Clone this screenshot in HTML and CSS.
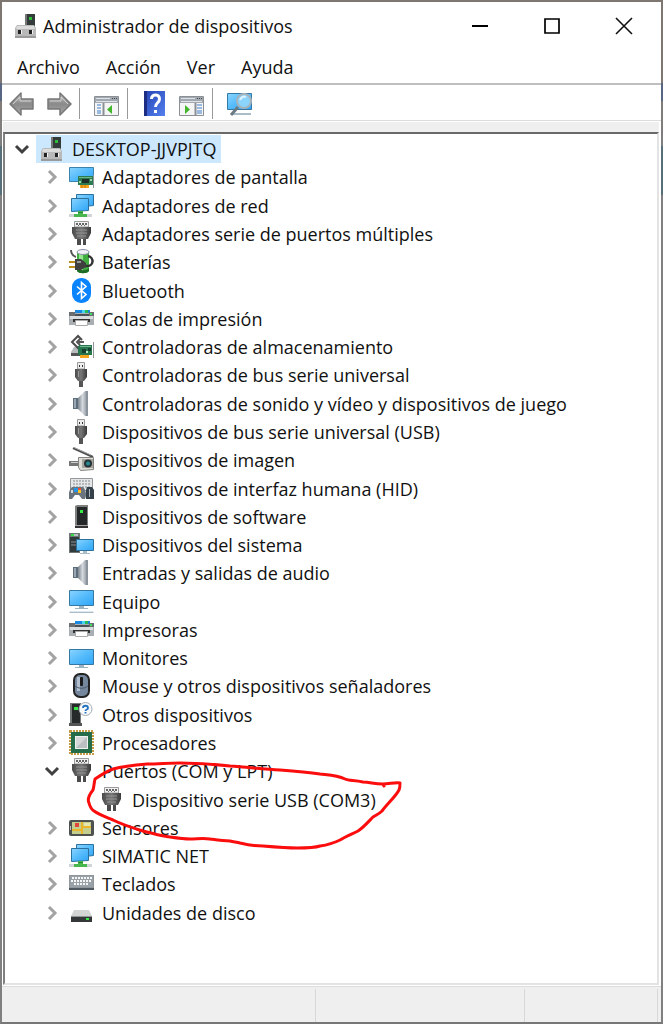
FILE: index.html
```html
<!DOCTYPE html>
<html lang="es">
<head>
    <meta charset="UTF-8">
    <meta name="viewport" content="width=device-width, initial-scale=1.0">
    <title>Administrador de dispositivos</title>
    <link rel="stylesheet" href="styles.css">
</head>
<body>
    <!-- Iconos -->
    <svg class="sprite" aria-hidden="true">
        <defs>
            <linearGradient id="gScreen" x1="0" y1="0" x2="1" y2="1">
                <stop offset="0" stop-color="#8ad4ff"/>
                <stop offset="0.5" stop-color="#55bbfb"/>
                <stop offset="1" stop-color="#2ea5f7"/>
            </linearGradient>
            <linearGradient id="gMetal" x1="0" y1="0" x2="1" y2="0">
                <stop offset="0" stop-color="#7b848d"/>
                <stop offset="0.5" stop-color="#d5dadf"/>
                <stop offset="1" stop-color="#8f979f"/>
            </linearGradient>
            <linearGradient id="gDark" x1="0" y1="0" x2="1" y2="0">
                <stop offset="0" stop-color="#4a4a4a"/>
                <stop offset="0.5" stop-color="#777"/>
                <stop offset="1" stop-color="#3a3a3a"/>
            </linearGradient>
            <linearGradient id="gArrow" x1="0" y1="0" x2="0" y2="1">
                <stop offset="0" stop-color="#c4c4c4"/>
                <stop offset="0.5" stop-color="#8a8a8a"/>
                <stop offset="1" stop-color="#a8a8a8"/>
            </linearGradient>
            <linearGradient id="gHelp" x1="0" y1="0" x2="1" y2="1">
                <stop offset="0" stop-color="#2443b4"/>
                <stop offset="1" stop-color="#5580ee"/>
            </linearGradient>
        </defs>

        <symbol id="i-computer" viewBox="0 0 26 26">
            <path d="M12 1h10v14H12z" fill="#333b3b"/>
            <path d="M12 1h2v14h-2z" fill="#777"/>
            <path d="M16 4h3v3h-3z" fill="#2fbf3c"/>
            <path d="M4 12h17l2 3v10H2V15z" fill="#b9b9b9"/>
            <path d="M4 13h17l1 3H3z" fill="#dcdcdc"/>
            <path d="M5 17h3v4H5zM16 17h3v4h-3z" fill="#222"/>
            <path d="M8 17h1v4H8zM19 17h1v4h-1z" fill="#f4f4f4"/>
            <path d="M2 23h21v2H2z" fill="#9b9b9b"/>
        </symbol>
        <symbol id="i-display" viewBox="0 0 26 26">
            <path d="M.5 3.500h24v14h-24z" fill="url(#gScreen)" stroke="#3c83b0"/>
            <path d="M9 12h15v9H9z" fill="#2c7b50"/>
            <path d="M10 13h13v1H10z" fill="#6ab387"/>
            <path d="M13 15h7v4h-7z" fill="#1c2f29"/>
            <path d="M10 17h2v2h-2zM21 15h2v2h-2z" fill="#9fd3ad"/>
            <path d="M11 21h9v3h-9z" fill="#f5a61d"/>
            <path d="M13 21v3M16 21v3" stroke="#c97a08"/>
            <path d="M24.500 11v13" stroke="#8d949a"/>
        </symbol>
        <symbol id="i-network" viewBox="0 0 26 26">
            <path d="M7.500 1.500h17v11l-17 2z" fill="url(#gScreen)" stroke="#2c719e"/>
            <path d="M0 21h23v3H0z" fill="#d2d5d7"/>
            <path d="M2.500 5.500h17v12l-17 1z" fill="url(#gScreen)" stroke="#2c719e"/>
            <path d="M9 18h5v3h4v3H5v-3h4z" fill="#47b74e"/>
            <path d="M9 19h5v1H9z" fill="#238b33"/>
        </symbol>
        <symbol id="i-serial" viewBox="0 0 26 26">
            <path d="M5.500.5h14V6h-14z" fill="#f1f1f1" stroke="#9a9a9a"/>
            <path d="M7 2h2v2H7zM10 2h2v2h-2zM13 2h2v2h-2zM16 2h2v2h-2zM9 4h1v1H9zM12 4h1v1h-1zM15 4h1v1h-1z" fill="#666"/>
            <path d="M3 6h19v6l-3 6H6l-3-6z" fill="url(#gDark)"/>
            <path d="M7 9h11M7 12h11M8 15h9" stroke="#959595"/>
            <path d="M8 18h4v6H8zM14 18h3v6h-3z" fill="#4b4b4b"/>
        </symbol>
        <symbol id="i-battery" viewBox="0 0 26 26">
            <path d="M8 3h12v19c-2 3-10 3-12 0z" fill="#3fae3f"/>
            <path d="M10 5h4v18h-4z" fill="#95e58d"/>
            <path d="M8 19c2 3 10 3 12 0v3c-2 3-10 3-12 0z" fill="#1d6b26"/>
            <ellipse cx="14" cy="3" rx="6" ry="2.500" fill="#f0f0f6" stroke="#8e8ea8"/>
            <path d="M2 1c0 4 2 6 5 7" fill="none" stroke="#555" stroke-width="2"/>
            <path d="M16 17c10 1 9-9 3-10" fill="none" stroke="#333" stroke-width="2.500"/>
            <path d="M6 10h6l5 4v4l-5 3H6z" fill="#3f3f3f"/>
            <path d="M8 12h4v2H8z" fill="#999"/>
            <path d="M0 13h6M0 18h6" stroke="#bd8e1c" stroke-width="2"/>
        </symbol>
        <symbol id="i-bluetooth" viewBox="0 0 26 26">
            <rect x="3" y="0" width="19" height="25" rx="9" fill="#0a84ff"/>
            <path d="M8 8.500l9 8-4.500 4v-16l4.500 4-9 8" fill="none" stroke="#fff" stroke-width="1.600"/>
        </symbol>
        <symbol id="i-printer" viewBox="0 0 26 26">
            <path d="M6 4h15v5H6z" fill="#1888e0"/>
            <path d="M13 4h3v5h-3z" fill="#45d6f1"/>
            <path d="M16 4h3v5h-3z" fill="#2cba58"/>
            <path d="M0 7h25v12H0z" fill="#a9aeb2"/>
            <path d="M0 6h6v4H0zM20 6h5v4h-5z" fill="#6a6e71"/>
            <path d="M6 8h14v2H6z" fill="#4b5257"/>
            <path d="M1 10h23v3H1z" fill="#dadddf"/>
            <path d="M4 13h17v3H4z" fill="#333"/>
            <path d="M6.500 14.500h12v5h-12z" fill="#fff" stroke="#aaa"/>
            <path d="M21 7h2v2h-2z" fill="#3fe05b"/>
        </symbol>
        <symbol id="i-storage" viewBox="0 0 26 26">
            <path d="M2 18l3-5h9v9H2z" fill="#b7bbbd"/>
            <path d="M2 19h10v3H2z" fill="#555"/>
            <path d="M13 6L9 2 3 8l6 6 2-2" fill="none" stroke="#4b4b4b" stroke-width="2"/>
            <path d="M15 8H8M11 5L8 8l3 3" fill="none" stroke="#555" stroke-width="2"/>
            <path d="M10 11h13v10H9v-7z" fill="#28764e"/>
            <path d="M11 12h11v1H11z" fill="#73b891"/>
            <path d="M13 15h4v4h-4zM19 14h3v3h-3z" fill="#183f30"/>
            <path d="M17 17h2v2h-2z" fill="#bfe3c7"/>
            <path d="M11 21h9v3h-9z" fill="#f5a61d"/>
            <path d="M24.500 8v16" stroke="#8d949a"/>
        </symbol>
        <symbol id="i-usb" viewBox="0 0 26 26">
            <path d="M8.500.5h7V7h-7z" fill="#eee" stroke="#999"/>
            <path d="M10 3h1v2h-1zM13 3h1v2h-1z" fill="#333"/>
            <path d="M6 7h12v8l-3 4H9l-3-4z" fill="url(#gDark)"/>
            <path d="M9 9h1v6H9z" fill="#999"/>
            <path d="M10 19h4v6h-4z" fill="#555"/>
        </symbol>
        <symbol id="i-speaker" viewBox="0 0 26 26">
            <path d="M4 7h6v11H4z" fill="#5d6d7b"/>
            <path d="M5 8h2v9H5z" fill="#98a7b3"/>
            <path d="M9 7l7-7h2v25h-2l-7-7z" fill="url(#gMetal)"/>
            <path d="M17 0h2v25h-2z" fill="#8a939b"/>
        </symbol>
        <symbol id="i-camera" viewBox="0 0 26 26">
            <path d="M4 1l20 9" stroke="#4e4e4e" stroke-width="2"/>
            <path d="M4 0l18 8" stroke="#aaa"/>
            <path d="M0 14h9v5H0z" fill="#777"/>
            <path d="M2 15h7v1H2z" fill="#ccc"/>
            <path d="M9.500 10.500h15v12l-13 1-2-3z" fill="#dedcd6" stroke="#85837f"/>
            <path d="M13 12h11v9H13z" fill="#a5a49f"/>
            <circle cx="19" cy="16.500" r="4" fill="#273337"/>
            <circle cx="19" cy="16.500" r="2" fill="#268c94"/>
        </symbol>
        <symbol id="i-hid" viewBox="0 0 26 26">
            <path d="M1.500 2.500h22v12h-22z" fill="#e4e6e7" stroke="#92989c"/>
            <path d="M4 5h18M4 8h18M4 11h18" stroke="#858b90" stroke-dasharray="2 1"/>
            <path d="M3 11h11c3 3 4 8 2 12h-3l-3-4H6l-3 4H0c-1-4 0-9 3-12z" fill="#69747e"/>
            <path d="M5 12h4v4H5z" fill="#2196e8"/>
            <path d="M9 12h3v2H9z" fill="#ed4f36"/>
            <path d="M9 14h3v3H9z" fill="#ffc525"/>
            <path d="M2 14h2v3H2z" fill="#d5dce0"/>
            <path d="M18 11h5l2 3v9h-8v-9z" fill="#34404a"/>
            <path d="M20 13h1v8h-1z" fill="#a6b1ba"/>
        </symbol>
        <symbol id="i-software" viewBox="0 0 26 26">
            <path d="M6 2l2-1h11v22H6z" fill="#7e8080"/>
            <path d="M8 3h10v18H8z" fill="#242828"/>
            <path d="M11 6h3v3h-3z" fill="#34ec43"/>
            <path d="M6 22h13v2H6z" fill="#333"/>
            <path d="M6 21h13v1H6z" fill="#a5a5a5"/>
        </symbol>
        <symbol id="i-system" viewBox="0 0 26 26">
            <path d="M0 1h11v20H0z" fill="#707777"/>
            <path d="M1 5h9v15H1z" fill="#30393c"/>
            <path d="M2 2h7v2H2z" fill="#b9c0c2"/>
            <path d="M2 2h3v2H2z" fill="#37dc42"/>
            <path d="M2 10h6M2 13h6" stroke="#8a9295"/>
            <path d="M7.500 7.500h17v11h-17z" fill="url(#gScreen)" stroke="#2c719e"/>
            <path d="M14 19h4v2h3v1H11v-1h3z" fill="#a9bdc9"/>
        </symbol>
        <symbol id="i-pc" viewBox="0 0 26 26">
            <path d="M.5 1.500h24v15H.5z" fill="url(#gScreen)" stroke="#3578a3"/>
            <path d="M10 17h5v2h4v1H6v-1h4z" fill="#9cb3c2"/>
            <path d="M2 22h21l2 2H0z" fill="#a9bcc8"/>
            <path d="M2 22h21v1H2z" fill="#dce8ef"/>
        </symbol>
        <symbol id="i-monitor" viewBox="0 0 26 26">
            <path d="M.5 4.500h24v15H.5z" fill="url(#gScreen)" stroke="#3578a3"/>
            <path d="M10 20h5v2h4v1H6v-1h4z" fill="#9cb3c2"/>
        </symbol>
        <symbol id="i-mouse" viewBox="0 0 26 26">
            <rect x="5" y="1" width="15" height="23" rx="6" fill="#75879c" stroke="#232323" stroke-width="2"/>
            <path d="M8 4h3v14H8z" fill="#b1bfce"/>
            <path d="M6 13c4 3 9 3 13 0" fill="none" stroke="#4b5a69"/>
            <rect x="11" y="4" width="3" height="9" rx="1" fill="#1b1b1b"/>
        </symbol>
        <symbol id="i-unknown" viewBox="0 0 26 26">
            <path d="M1 1h11v22H1z" fill="#737878"/>
            <path d="M3 2h8v19H3z" fill="#262a2a"/>
            <path d="M5 5h4v3H5z" fill="#34ec43"/>
            <path d="M0 21h13v3H0z" fill="#555"/>
            <circle cx="16.500" cy="7" r="6.500" fill="#f7f9fb" stroke="#a7adb2"/>
            <path d="M14 6c0-3 5-3 5 0 0 2-2.500 1-2.500 3M16.500 10v1.500" fill="none" stroke="#2272bd" stroke-width="1.800"/>
        </symbol>
        <symbol id="i-cpu" viewBox="0 0 26 26">
            <path d="M1 1h23v23H1z" fill="none" stroke="#c49a45" stroke-width="2" stroke-dasharray="2 1"/>
            <path d="M2 2h21v21H2z" fill="#256c4b"/>
            <path d="M6 6h13v13H6z" fill="#d5d7d8"/>
            <path d="M6 19L19 6v13z" fill="#bbbfc1"/>
            <path d="M6.500 6.500h12v12h-12z" fill="none" stroke="#eff3f0"/>
        </symbol>
        <symbol id="i-sensor" viewBox="0 0 26 26">
            <rect x="0" y="5" width="25" height="16" rx="2" fill="#4d5251"/>
            <path d="M3 7h19v12H3z" fill="#c4cf8f"/>
            <path d="M13 7v12M3 15h10M13 12h9" stroke="#e9b62c" stroke-width="2"/>
            <path d="M6 8h4v4H6z" fill="#e2463a"/>
            <path d="M15 8h6v3h-6z" fill="#e7e6ae"/>
            <path d="M1 11h1v4H1z" fill="#bbb"/>
        </symbol>
        <symbol id="i-keyboard" viewBox="0 0 26 26">
            <path d="M0 4h25v15H0z" fill="#8f969c"/>
            <path d="M1 5h23v11H1z" fill="#9aa2a9"/>
            <path d="M3 7h20M2 10h21M5 13h15" stroke="#f6f6f6" stroke-width="2" stroke-dasharray="2 1"/>
            <path d="M0 17h25v2H0z" fill="#505a62"/>
        </symbol>
        <symbol id="i-disk" viewBox="0 0 26 26">
            <path d="M5 10h15l3 6H2z" fill="#d3d5d5"/>
            <path d="M2 16h21v6H2z" fill="#343838"/>
            <path d="M2 16h21v1H2z" fill="#8f9494"/>
            <path d="M17 18h3v2h-3z" fill="#37e644"/>
        </symbol>

        <symbol id="i-chevron" viewBox="0 0 20 20">
            <path d="M7 4l6 6-6 6" fill="none" stroke="currentColor" stroke-width="3"/>
        </symbol>
        <symbol id="i-chevron-open" viewBox="0 0 20 20">
            <path d="M4 7l6 6 6-6" fill="none" stroke="currentColor" stroke-width="3"/>
        </symbol>

        <symbol id="t-arrow" viewBox="0 0 26 26">
            <path d="M1 13L12 2v6h12v10H12v6z" fill="url(#gArrow)" stroke="#777" stroke-width="1.500" stroke-linejoin="round"/>
            <path d="M4 13l7-7v4h11" fill="none" stroke="#d0d0d0"/>
        </symbol>
        <symbol id="t-tree" viewBox="0 0 26 26">
            <path d="M.5 5.500h24v19H.5z" fill="#f5f5f5" stroke="#8b9097"/>
            <path d="M1 6h23v6H1z" fill="#a2a8b0"/>
            <path d="M2 7h14v1H2zM2 10h21v1H2z" fill="#dfe3e8"/>
            <path d="M18 7h1v1h-1zM20 7h1v1h-1zM22 7h1v1h-1z" fill="#444"/>
            <path d="M9.500 12v12" stroke="#8b9097" stroke-width="2"/>
            <path d="M3 14h4M3 17h4M3 20h4M3 22h4" stroke="#3f80c8"/>
            <path d="M18 14v9l-5-4.500z" fill="#43b52c"/>
        </symbol>
        <symbol id="t-pane" viewBox="0 0 26 26">
            <path d="M.5 5.500h24v19H.5z" fill="#f5f5f5" stroke="#8b9097"/>
            <path d="M1 6h23v6H1z" fill="#a2a8b0"/>
            <path d="M2 7h14v1H2zM2 10h21v1H2z" fill="#dfe3e8"/>
            <path d="M18 7h1v1h-1zM20 7h1v1h-1zM22 7h1v1h-1z" fill="#444"/>
            <path d="M16.500 12v12" stroke="#8b9097" stroke-width="2"/>
            <path d="M18 14h5M18 17h5M18 20h5M18 22h5" stroke="#3f80c8"/>
            <path d="M6 14v9l5-4.500z" fill="#43b52c"/>
        </symbol>
        <symbol id="t-help" viewBox="0 0 26 26">
            <path d="M2 0h21v25H2z" fill="url(#gHelp)"/>
            <path d="M2 0h3v25H2z" fill="#1d2d84"/>
            <path d="M9.500 8c0-5.500 8-5.500 8 0 0 4-4 3.500-4 8" fill="none" stroke="#fff" stroke-width="3"/>
            <path d="M12 19h3v3h-3z" fill="#fff"/>
        </symbol>
        <symbol id="t-scan" viewBox="0 0 26 26">
            <path d="M.5 2.500h24v16H.5z" fill="url(#gScreen)" stroke="#3578a3"/>
            <path d="M4 22h20v2H4z" fill="#a9bcc8"/>
            <path d="M11 16l-7 8" stroke="#6c7a84" stroke-width="3"/>
            <circle cx="17" cy="10" r="7" fill="#8bd4fb" stroke="#a5b3bc" stroke-width="2"/>
            <path d="M13 9c1-3 4-4 6-3" fill="none" stroke="#dff4ff" stroke-width="2"/>
        </symbol>
    </svg>

    <div class="window">
        <header class="titlebar">
            <svg class="icon"><use href="#i-computer"/></svg>
            <h1>Administrador de dispositivos</h1>
            <div class="window-buttons">
                <button type="button" aria-label="Minimizar"><svg viewBox="0 0 18 18"><path d="M1 9h16" stroke="#000" stroke-width="2"/></svg></button>
                <button type="button" aria-label="Maximizar"><svg viewBox="0 0 18 18"><path d="M2 2h14v14H2z" fill="none" stroke="#000" stroke-width="1.700"/></svg></button>
                <button type="button" aria-label="Cerrar"><svg viewBox="0 0 18 18"><path d="M1 1l16 16M17 1L1 17" stroke="#111" stroke-width="1.600"/></svg></button>
            </div>
        </header>

        <nav class="menubar">
            <button type="button">Archivo</button>
            <button type="button">Acción</button>
            <button type="button">Ver</button>
            <button type="button">Ayuda</button>
        </nav>

        <div class="toolbar">
            <div class="tool-group">
                <button type="button" aria-label="Atrás"><svg class="icon"><use href="#t-arrow"/></svg></button>
                <button type="button" aria-label="Adelante"><svg class="icon flip"><use href="#t-arrow"/></svg></button>
            </div>
            <div class="tool-group">
                <button type="button" aria-label="Árbol de consola"><svg class="icon"><use href="#t-tree"/></svg></button>
            </div>
            <div class="tool-group">
                <button type="button" aria-label="Ayuda"><svg class="icon"><use href="#t-help"/></svg></button>
                <button type="button" aria-label="Panel de acciones"><svg class="icon"><use href="#t-pane"/></svg></button>
            </div>
            <div class="tool-group">
                <button type="button" aria-label="Buscar cambios de hardware"><svg class="icon"><use href="#t-scan"/></svg></button>
            </div>
        </div>

        <main class="pane">
            <ul class="tree">
                <li class="node root open">
                    <button type="button" class="toggle" aria-label="Contraer"><svg><use href="#i-chevron-open"/></svg></button>
                    <span class="label selected"><svg class="icon"><use href="#i-computer"/></svg>DESKTOP-JJVPJTQ</span>
                </li>
                <li class="node">
                    <button type="button" class="toggle" aria-label="Expandir"><svg><use href="#i-chevron"/></svg></button>
                    <span class="label"><svg class="icon"><use href="#i-display"/></svg>Adaptadores de pantalla</span>
                </li>
                <li class="node">
                    <button type="button" class="toggle" aria-label="Expandir"><svg><use href="#i-chevron"/></svg></button>
                    <span class="label"><svg class="icon"><use href="#i-network"/></svg>Adaptadores de red</span>
                </li>
                <li class="node">
                    <button type="button" class="toggle" aria-label="Expandir"><svg><use href="#i-chevron"/></svg></button>
                    <span class="label"><svg class="icon"><use href="#i-serial"/></svg>Adaptadores serie de puertos múltiples</span>
                </li>
                <li class="node">
                    <button type="button" class="toggle" aria-label="Expandir"><svg><use href="#i-chevron"/></svg></button>
                    <span class="label"><svg class="icon"><use href="#i-battery"/></svg>Baterías</span>
                </li>
                <li class="node">
                    <button type="button" class="toggle" aria-label="Expandir"><svg><use href="#i-chevron"/></svg></button>
                    <span class="label"><svg class="icon"><use href="#i-bluetooth"/></svg>Bluetooth</span>
                </li>
                <li class="node">
                    <button type="button" class="toggle" aria-label="Expandir"><svg><use href="#i-chevron"/></svg></button>
                    <span class="label"><svg class="icon"><use href="#i-printer"/></svg>Colas de impresión</span>
                </li>
                <li class="node">
                    <button type="button" class="toggle" aria-label="Expandir"><svg><use href="#i-chevron"/></svg></button>
                    <span class="label"><svg class="icon"><use href="#i-storage"/></svg>Controladoras de almacenamiento</span>
                </li>
                <li class="node">
                    <button type="button" class="toggle" aria-label="Expandir"><svg><use href="#i-chevron"/></svg></button>
                    <span class="label"><svg class="icon"><use href="#i-usb"/></svg>Controladoras de bus serie universal</span>
                </li>
                <li class="node">
                    <button type="button" class="toggle" aria-label="Expandir"><svg><use href="#i-chevron"/></svg></button>
                    <span class="label"><svg class="icon"><use href="#i-speaker"/></svg>Controladoras de sonido y vídeo y dispositivos de juego</span>
                </li>
                <li class="node">
                    <button type="button" class="toggle" aria-label="Expandir"><svg><use href="#i-chevron"/></svg></button>
                    <span class="label"><svg class="icon"><use href="#i-usb"/></svg>Dispositivos de bus serie universal (USB)</span>
                </li>
                <li class="node">
                    <button type="button" class="toggle" aria-label="Expandir"><svg><use href="#i-chevron"/></svg></button>
                    <span class="label"><svg class="icon"><use href="#i-camera"/></svg>Dispositivos de imagen</span>
                </li>
                <li class="node">
                    <button type="button" class="toggle" aria-label="Expandir"><svg><use href="#i-chevron"/></svg></button>
                    <span class="label"><svg class="icon"><use href="#i-hid"/></svg>Dispositivos de interfaz humana (HID)</span>
                </li>
                <li class="node">
                    <button type="button" class="toggle" aria-label="Expandir"><svg><use href="#i-chevron"/></svg></button>
                    <span class="label"><svg class="icon"><use href="#i-software"/></svg>Dispositivos de software</span>
                </li>
                <li class="node">
                    <button type="button" class="toggle" aria-label="Expandir"><svg><use href="#i-chevron"/></svg></button>
                    <span class="label"><svg class="icon"><use href="#i-system"/></svg>Dispositivos del sistema</span>
                </li>
                <li class="node">
                    <button type="button" class="toggle" aria-label="Expandir"><svg><use href="#i-chevron"/></svg></button>
                    <span class="label"><svg class="icon"><use href="#i-speaker"/></svg>Entradas y salidas de audio</span>
                </li>
                <li class="node">
                    <button type="button" class="toggle" aria-label="Expandir"><svg><use href="#i-chevron"/></svg></button>
                    <span class="label"><svg class="icon"><use href="#i-pc"/></svg>Equipo</span>
                </li>
                <li class="node">
                    <button type="button" class="toggle" aria-label="Expandir"><svg><use href="#i-chevron"/></svg></button>
                    <span class="label"><svg class="icon"><use href="#i-printer"/></svg>Impresoras</span>
                </li>
                <li class="node">
                    <button type="button" class="toggle" aria-label="Expandir"><svg><use href="#i-chevron"/></svg></button>
                    <span class="label"><svg class="icon"><use href="#i-monitor"/></svg>Monitores</span>
                </li>
                <li class="node">
                    <button type="button" class="toggle" aria-label="Expandir"><svg><use href="#i-chevron"/></svg></button>
                    <span class="label"><svg class="icon"><use href="#i-mouse"/></svg>Mouse y otros dispositivos señaladores</span>
                </li>
                <li class="node">
                    <button type="button" class="toggle" aria-label="Expandir"><svg><use href="#i-chevron"/></svg></button>
                    <span class="label"><svg class="icon"><use href="#i-unknown"/></svg>Otros dispositivos</span>
                </li>
                <li class="node">
                    <button type="button" class="toggle" aria-label="Expandir"><svg><use href="#i-chevron"/></svg></button>
                    <span class="label"><svg class="icon"><use href="#i-cpu"/></svg>Procesadores</span>
                </li>
                <li class="node open">
                    <button type="button" class="toggle" aria-label="Contraer"><svg><use href="#i-chevron-open"/></svg></button>
                    <span class="label"><svg class="icon"><use href="#i-serial"/></svg>Puertos (COM y LPT)</span>
                </li>
                <li class="node child">
                    <span class="label"><svg class="icon"><use href="#i-serial"/></svg>Dispositivo serie USB (COM3)</span>
                    <!-- trazo rojo alrededor del puerto -->
                    <svg class="mark" viewBox="85 755 320 100" aria-hidden="true">
                        <path d="M384 786L383 784C374 784 370 782 363 782C354 780 349 781 345 779C337 775 329 775 320 774C306 772 293 771 280 770C263 769 246 767 230 766C213 764 197 763 180 763C169 763 158 764 147 764C135 765 124 766 113 769C107 771 101 775 95 779C94 783 94 787 93 790C89 795 87 799 89 803C90 807 91 809 94 811C100 815 106 817 113 820C123 825 133 828 143 831C152 833 161 836 170 837C177 838 184 839 190 839C197 839 203 838 210 839C217 840 223 841 230 841C234 842 237 842 240 843C248 845 255 846 263 846C275 847 287 848 297 848C306 848 314 848 320 846C327 845 334 843 340 840C346 836 352 834 358 831C364 827 369 821 373 817C376 815 379 814 382 811C388 803 396 796 399 790C400 788 400 785 400 783C396 782 389 784 383 784"/>
                    </svg>
                </li>
                <li class="node">
                    <button type="button" class="toggle" aria-label="Expandir"><svg><use href="#i-chevron"/></svg></button>
                    <span class="label"><svg class="icon"><use href="#i-sensor"/></svg>Sensores</span>
                </li>
                <li class="node">
                    <button type="button" class="toggle" aria-label="Expandir"><svg><use href="#i-chevron"/></svg></button>
                    <span class="label"><svg class="icon"><use href="#i-network"/></svg>SIMATIC NET</span>
                </li>
                <li class="node">
                    <button type="button" class="toggle" aria-label="Expandir"><svg><use href="#i-chevron"/></svg></button>
                    <span class="label"><svg class="icon"><use href="#i-keyboard"/></svg>Teclados</span>
                </li>
                <li class="node">
                    <button type="button" class="toggle" aria-label="Expandir"><svg><use href="#i-chevron"/></svg></button>
                    <span class="label"><svg class="icon"><use href="#i-disk"/></svg>Unidades de disco</span>
                </li>
            </ul>
        </main>

        <footer class="statusbar">
            <div></div>
            <div></div>
            <div></div>
        </footer>
    </div>
</body>
</html>
```
FILE: styles.css
```css
* {
    box-sizing: border-box;
}
body {
    margin: 0;
    font-family: "Open Sans", "Noto Sans", sans-serif;
    font-size: 18px;
    line-height: 24px;
    color: #111;
    background: linear-gradient(#7b6a5c 83px, #1b3f86 83px, #1b3f86 101px, #80746a 101px, #808080 146px, #17566e 146px, #17566e 195px, #808080 195px);
}
button {
    font: inherit;
    color: inherit;
    background: none;
    border: none;
    padding: 0;
    cursor: pointer;
}
svg {
    display: block;
}
.sprite {
    position: absolute;
    width: 0;
    height: 0;
}
.icon {
    width: 26px;
    height: 26px;
    flex: none;
}
.window {
    display: flex;
    flex-direction: column;
    min-height: 100vh;
    background: #fff;
    background-clip: padding-box;
    border: 2px solid rgba(128, 128, 128, 0.6);
    border-bottom-color: #777;
}

/* title bar */
.titlebar {
    display: flex;
    align-items: center;
    height: 48px;
    padding: 0 1px 0 11px;
    gap: 4px;
}
.titlebar h1 {
    flex: 1;
    margin: 0;
    font-size: 18px;
    font-weight: normal;
}
.window-buttons {
    display: flex;
}
.window-buttons button {
    display: grid;
    place-items: center;
    width: 72px;
    height: 44px;
}
.window-buttons svg {
    width: 18px;
    height: 18px;
}

/* menu */
.menubar {
    display: flex;
    gap: 26px;
    height: 35px;
    padding: 0 15px;
    border-bottom: 2px solid #bfbfbf;
}

/* toolbar */
.toolbar {
    display: flex;
    height: 36px;
    padding: 3px 0 1px;
    border-bottom: 1px solid #ddd;
}
.tool-group {
    display: flex;
    align-items: center;
    gap: 11px;
    padding: 0 7px;
}
.tool-group + .tool-group {
    padding-left: 14px;
    border-left: 1px solid #999;
}
.flip {
    transform: scaleX(-1);
}

/* device tree */
.pane {
    display: flex;
    flex: 1;
    margin: 11px 2px 1px 1px;
    padding: 1px 0 56px;
    border: 2px solid #e3e3e3;
    border-top-color: #696969;
    border-left-color: #808080;
    box-shadow: 0 -10px 0 #efefef;
}
.tree {
    display: flex;
    flex: 1;
    flex-direction: column;
    list-style: none;
    margin: 0;
    padding: 0;
}
.node {
    position: relative;
    display: flex;
    flex: 1;
    align-items: center;
    gap: 4px;
    min-height: 26px;
    padding-left: 37px;
}
.node.root {
    padding-left: 7px;
}
.node.child {
    padding-left: 91px;
}
.toggle {
    width: 20px;
    height: 20px;
    color: #a3a3a3;
}
.open .toggle {
    color: #404040;
}
.toggle svg {
    width: 20px;
    height: 20px;
}
.label {
    display: flex;
    align-items: center;
    gap: 7px;
    height: 100%;
    padding: 0 5px 0 3px;
    white-space: nowrap;
}
.label.selected {
    background: #cce8ff;
}
.mark {
    position: absolute;
    left: 80px;
    top: -30px;
    z-index: 1;
    width: 320px;
    height: 100px;
    pointer-events: none;
}
.mark path {
    fill: none;
    stroke: #fb0d0d;
    stroke-width: 3;
    stroke-linecap: round;
    stroke-linejoin: round;
}

/* status bar */
.statusbar {
    display: grid;
    grid-template-columns: 314fr 209fr 133fr;
    height: 36px;
    padding: 2px 3px 0 0;
    background: #efefef;
    border-top: 1px solid #dcdcdc;
}
.statusbar div {
    border-right: 1px solid #d8d8d8;
}
```
